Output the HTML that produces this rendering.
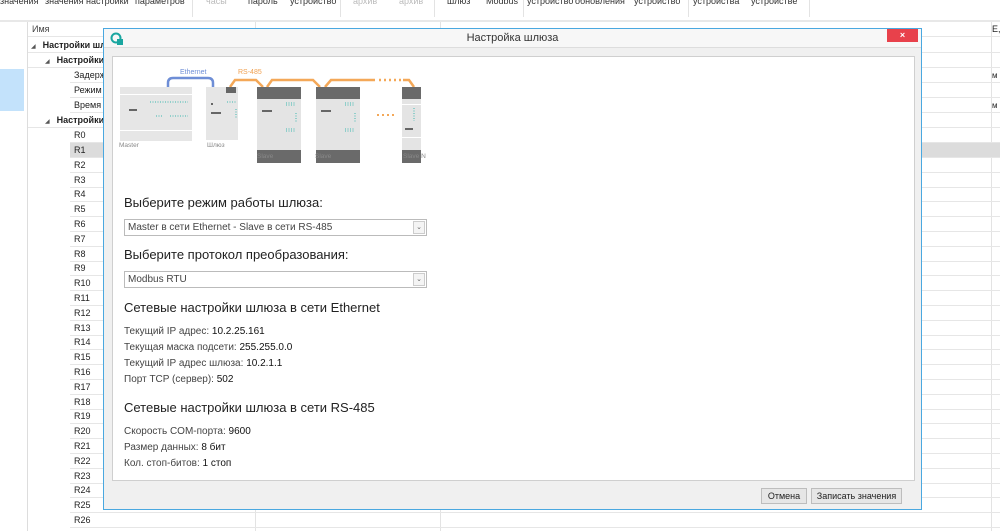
<!DOCTYPE html>
<html><head><meta charset="utf-8"><style>
*{margin:0;padding:0;box-sizing:border-box}
body{width:1000px;height:531px;overflow:hidden;background:#fff;font-family:"Segoe UI","Liberation Sans","DejaVu Sans",sans-serif;position:relative;color:#222}
.a{position:absolute;white-space:nowrap}
.tb{font-size:9px;top:-4px;color:#333}
.g{color:#bbb}
.vs{position:absolute;width:1px;background:#e3e3e3}
.row{position:absolute;height:15px;font-size:9px;line-height:15px;border-bottom:1px solid #e6e6e6}
.dlg{position:absolute;left:103px;top:28px;width:819px;height:482px;background:#f0f0f0;border:1px solid #4aa8e0}
.sm{font-size:10px;color:#444}
.sel{position:absolute;left:19px;width:303px;height:17px;background:#fff;border:1px solid #bbb;font-size:10px;line-height:15px;padding-left:3px;color:#444}
.sel i{position:absolute;right:1px;top:1px;width:12px;height:13px;border:1px solid #ccc;background:#f4f4f4;font-style:normal;font-size:7px;line-height:12px;text-align:center;color:#666}
.btn{position:absolute;top:459px;height:16px;background:#e6e6e6;border:1px solid #bdbdbd;font-size:9px;line-height:14px;text-align:center;color:#222}
.h{position:absolute;left:11px;font-size:13px;color:#222;white-space:nowrap}
</style></head><body>
<div class="a tb" style="left:0">значения</div>
<div class="a tb" style="left:45px">значения</div>
<div class="a tb" style="left:86px">настройки</div>
<div class="a tb" style="left:135px">параметров</div>
<div class="a tb g" style="left:206px">часы</div>
<div class="a tb" style="left:248px">пароль</div>
<div class="a tb" style="left:290px">устройство</div>
<div class="a tb g" style="left:353px">архив</div>
<div class="a tb g" style="left:399px">архив</div>
<div class="a tb" style="left:447px">шлюз</div>
<div class="a tb" style="left:486px">Modbus</div>
<div class="a tb" style="left:527px">устройство</div>
<div class="a tb" style="left:575px">обновления</div>
<div class="a tb" style="left:634px">устройство</div>
<div class="a tb" style="left:693px">устройства</div>
<div class="a tb" style="left:751px">устройстве</div>
<div class="vs" style="left:192px;top:0;height:17px"></div>
<div class="vs" style="left:340px;top:0;height:17px"></div>
<div class="vs" style="left:434px;top:0;height:17px"></div>
<div class="vs" style="left:523px;top:0;height:17px"></div>
<div class="vs" style="left:688px;top:0;height:17px"></div>
<div class="vs" style="left:809px;top:0;height:17px"></div>
<div class="a" style="left:0;top:20px;width:1000px;height:2px;background:#e8e8e8"></div>
<div class="vs" style="left:27px;top:22px;height:509px;background:#ddd"></div>
<div class="a" style="left:0;top:69px;width:24px;height:42px;background:#c3e2fb"></div>
<div class="row" style="left:28px;top:22px;width:972px;background:#fff"><span style="margin-left:4px;color:#444">Имя</span></div>
<div class="a" style="left:992px;top:24px;font-size:9px">Е,</div>
<div class="vs" style="left:255px;top:22px;height:509px"></div>
<div class="vs" style="left:440px;top:22px;height:509px"></div>
<div class="vs" style="left:991px;top:22px;height:509px"></div>
<div class="row" style="left:28px;top:38px;width:972px"><span style="margin-left:3px;font-size:6px;color:#555">◢</span><b style="margin-left:7px">Настройки шл</b></div>
<div class="row" style="left:28px;top:53px;width:972px"><span style="margin-left:17px;font-size:6px;color:#555">◢</span><b style="margin-left:7px">Настройки</b></div>
<div class="row" style="left:70px;top:68px;width:930px"><span style="margin-left:4px">Задерж</span><span class="a" style="left:922px;font-size:8px">м</span></div>
<div class="row" style="left:70px;top:83px;width:930px"><span style="margin-left:4px">Режим</span></div>
<div class="row" style="left:70px;top:98px;width:930px"><span style="margin-left:4px">Время</span><span class="a" style="left:922px;font-size:8px">м</span></div>
<div class="row" style="left:28px;top:113px;width:972px"><span style="margin-left:17px;font-size:6px;color:#555">◢</span><b style="margin-left:7px">Настройки</b></div>
<div class="row" style="left:70px;top:128px;width:930px"><span style="margin-left:4px">R0</span></div>
<div class="row" style="left:70px;top:143px;width:930px;background:#dcdcdc"><span style="margin-left:4px">R1</span></div>
<div id="rr"></div>
<script>
var h='';for(var i=2;i<=26;i++){var t=143+(i-1)*14.8;h+='<div class="row" style="left:70px;top:'+t+'px;width:930px"><span style="margin-left:4px">R'+i+'</span></div>';}
document.getElementById('rr').outerHTML=h;
</script>
<div class="dlg">
 <div class="a" style="left:0;top:0;width:817px;height:19px;background:#f7f7f7;border-bottom:1px solid #ddd"></div>
 <svg class="a" style="left:6px;top:3px" width="14" height="14" viewBox="0 0 14 14"><circle cx="6" cy="6" r="4.5" fill="none" stroke="#1aa6a0" stroke-width="2"/><rect x="7" y="7" width="6" height="6" fill="#1aa6a0"/></svg>
 <div class="a" style="left:0;width:817px;top:3px;text-align:center;font-size:11px;color:#333">Настройка шлюза</div>
 <div class="a" style="left:783px;top:0;width:31px;height:13px;background:#e8414b;color:#fff;font-size:9px;text-align:center;line-height:13px;font-weight:bold">×</div>
 <div class="a" style="left:8px;top:27px;width:803px;height:425px;background:#fff;border:1px solid #cfcfcf">
  <svg class="a" style="left:0;top:0" width="320" height="110" viewBox="0 0 320 110">
   <text x="67" y="17" font-size="7" fill="#6e8ed6" font-family="Liberation Sans">Ethernet</text>
   <text x="125" y="17" font-size="7" fill="#f0a050" font-family="Liberation Sans">RS-485</text>
   <path d="M55 30 V26 q0-5 5-5 H95 q5 0 5 5 V30" fill="none" stroke="#6e8ed6" stroke-width="2.5"/>
   <path d="M117 30 L122 23 H143 L150 30 M154 30 L159 23 H200 L207 30 M212 30 L218 23 H262 M290 23 H296 L301 30" fill="none" stroke="#f4a858" stroke-width="2.5"/>
   <path d="M266 23 H288" stroke="#f4a858" stroke-width="2.5" stroke-dasharray="2 3" fill="none"/>
   <rect x="7" y="30" width="72" height="54" fill="#e6e6e6"/><rect x="7" y="37" width="72" height="1" fill="#fff"/><rect x="7" y="73" width="72" height="1" fill="#fff"/>
   <rect x="16" y="52" width="8" height="2" fill="#666"/>
   <path d="M37 45 H75 M57 59 H75 M43 59 H50" stroke="#3cb8b0" stroke-width="1" stroke-dasharray="1 1.5"/>
   <rect x="93" y="30" width="32" height="53" fill="#e6e6e6"/><rect x="113" y="30" width="10" height="6" fill="#666"/><rect x="98" y="55" width="10" height="2" fill="#666"/><rect x="98" y="46" width="2" height="2" fill="#666"/>
   <path d="M114 45 H123 M123 52 V62" stroke="#3cb8b0" stroke-width="1" stroke-dasharray="1 1.5"/>
   <rect x="144" y="30" width="44" height="76" fill="#e4e4e4"/><rect x="144" y="30" width="44" height="12" fill="#6a6a6a"/><rect x="144" y="93" width="44" height="13" fill="#6a6a6a"/><rect x="149" y="53" width="10" height="2" fill="#666"/>
   <path d="M173 46 H183 M173 48 H183 M183 56 V66 M173 72 H183 M173 74 H183" stroke="#3cb8b0" stroke-width="1" stroke-dasharray="1 1.5"/>
   <rect x="203" y="30" width="44" height="76" fill="#e4e4e4"/><rect x="203" y="30" width="44" height="12" fill="#6a6a6a"/><rect x="203" y="93" width="44" height="13" fill="#6a6a6a"/><rect x="208" y="53" width="10" height="2" fill="#666"/>
   <path d="M232 46 H242 M232 48 H242 M242 56 V66 M232 72 H242 M232 74 H242" stroke="#3cb8b0" stroke-width="1" stroke-dasharray="1 1.5"/>
   <path d="M264 58 H281" stroke="#f4a858" stroke-width="2" stroke-dasharray="2 3"/>
   <rect x="289" y="30" width="19" height="76" fill="#e4e4e4"/><rect x="289" y="30" width="19" height="12" fill="#6a6a6a"/><rect x="289" y="93" width="19" height="13" fill="#6a6a6a"/><rect x="289" y="47" width="19" height="1" fill="#fff"/><rect x="289" y="80" width="19" height="1" fill="#fff"/><rect x="292" y="71" width="8" height="2" fill="#666"/>
   <path d="M301 51 V64" stroke="#3cb8b0" stroke-width="1" stroke-dasharray="1 1.5"/>
   <g font-size="6.5" fill="#888" font-family="Liberation Sans"><text x="6" y="90">Master</text><text x="94" y="90">Шлюз</text><text x="144" y="101">Slave</text><text x="202" y="101">Slave</text><text x="290" y="101">Slave N</text></g>
  </svg>
  <div class="h" style="top:138px">Выберите режим работы шлюза:</div>
  <div class="sel" style="top:162px;left:11px">Master в сети Ethernet - Slave в сети RS-485<i>⌄</i></div>
  <div class="h" style="top:190px">Выберите протокол преобразования:</div>
  <div class="sel" style="top:214px;left:11px">Modbus RTU<i>⌄</i></div>
  <div class="h" style="top:243px">Сетевые настройки шлюза в сети Ethernet</div>
  <div class="a sm" style="left:11px;top:269px">Текущий IP адрес: <span style="color:#111">10.2.25.161</span></div>
  <div class="a sm" style="left:11px;top:285px">Текущая маска подсети: <span style="color:#111">255.255.0.0</span></div>
  <div class="a sm" style="left:11px;top:301px">Текущий IP адрес шлюза: <span style="color:#111">10.2.1.1</span></div>
  <div class="a sm" style="left:11px;top:317px">Порт TCP (сервер): <span style="color:#111">502</span></div>
  <div class="h" style="top:343px">Сетевые настройки шлюза в сети RS-485</div>
  <div class="a sm" style="left:11px;top:369px">Скорость COM-порта: <span style="color:#111">9600</span></div>
  <div class="a sm" style="left:11px;top:385px">Размер данных: <span style="color:#111">8 бит</span></div>
  <div class="a sm" style="left:11px;top:401px">Кол. стоп-битов: <span style="color:#111">1 стоп</span></div>
 </div>
 <div class="btn" style="left:657px;width:46px">Отмена</div>
 <div class="btn" style="left:707px;width:91px">Записать значения</div>
</div>
</body></html>
